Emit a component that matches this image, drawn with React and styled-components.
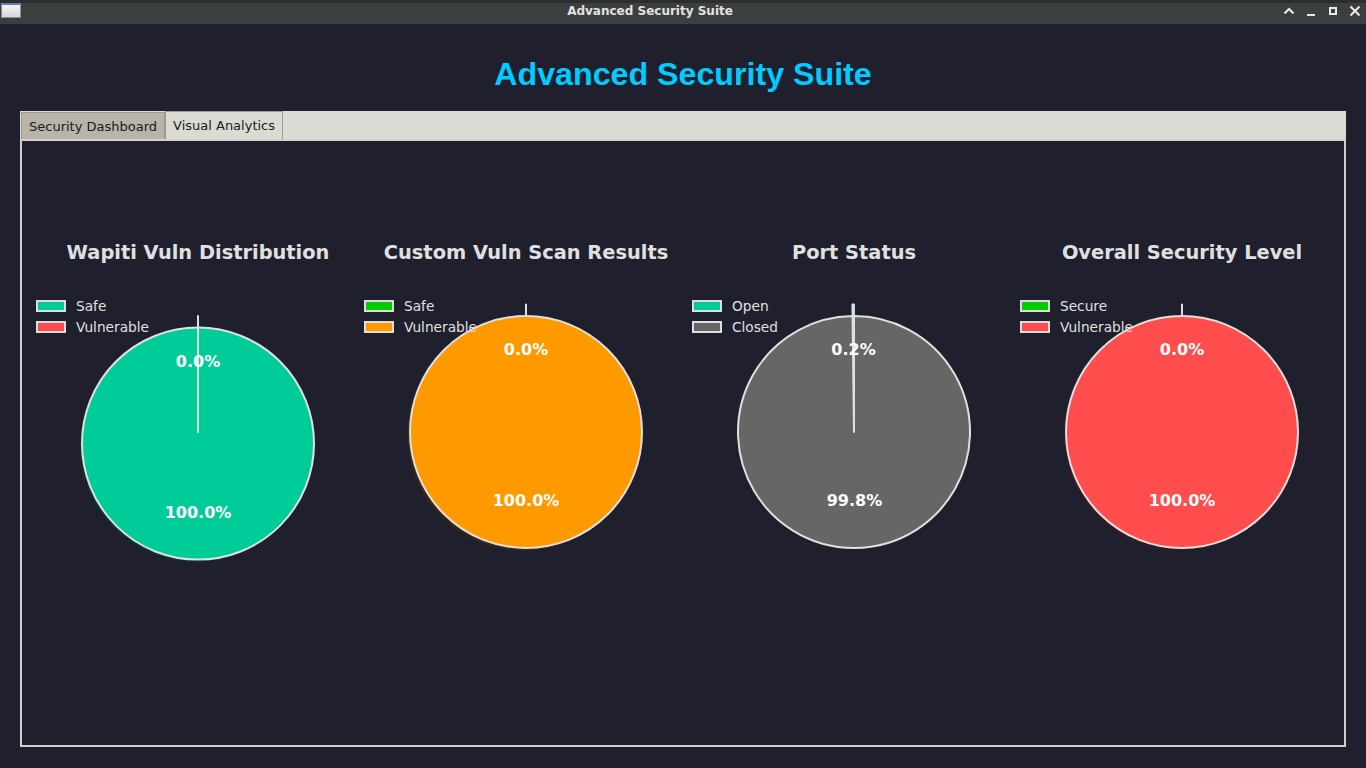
import React from 'react';
import styled, { createGlobalStyle } from 'styled-components';

const GlobalStyle = createGlobalStyle`
  html, body { margin: 0; padding: 0; background: #1f1f2e; }
  body { font-family: "DejaVu Sans", "Noto Sans", sans-serif; }
  #root { width: 1366px; height: 768px; }
`;

const Window = styled.div`
  width: 1366px;
  height: 768px;
  display: flex;
  flex-direction: column;
  background: #1f1f2e;
  overflow: hidden;
`;

const TitleBar = styled.div`
  height: 24px;
  flex: none;
  display: flex;
  align-items: stretch;
  background: #3c3f3f;
  box-shadow: inset 0 3px 0 #2c2e2e;
`;

const AppIcon = styled.div`
  width: 20px;
  height: 15px;
  margin: 3px 1px 0 1px;
  box-sizing: border-box;
  border: 1px solid #8c8f92;
  border-top: 2px solid #5b7fc4;
  background: linear-gradient(#f4f4f4, #d6d6d6);
`;

const TitleText = styled.div`
  flex: 1;
  text-align: center;
  font-family: "DejaVu Sans", sans-serif;
  font-weight: bold;
  font-size: 12px;
  line-height: 22px;
  color: #e2e2e2;
`;

const Controls = styled.div`
  display: flex;
`;

const CtrlButton = styled.div`
  width: 22px;
  height: 24px;
  display: flex;
  align-items: center;
  justify-content: center;
  padding-bottom: 2px;
  box-sizing: border-box;
`;

const Heading = styled.h1`
  margin: 30px 0 0;
  font-family: "Liberation Sans", Arial, sans-serif;
  font-weight: bold;
  font-size: 32.2px;
  line-height: 40px;
  color: #00ccff;
  text-align: center;
`;

const Notebook = styled.div`
  flex: 1;
  margin: 17px 20px 21px;
  display: flex;
  flex-direction: column;
  min-height: 0;
`;

const TabBar = styled.div`
  height: 28px;
  flex: none;
  display: flex;
  align-items: flex-end;
  background: #dcdad5;
`;

const Tab = styled.div`
  height: ${p => (p.$active ? 28 : 27)}px;
  box-sizing: border-box;
  padding: 0 7px 0 7px;
  display: flex;
  align-items: center;
  font-family: "DejaVu Sans", sans-serif;
  font-size: 13px;
  color: #1b1b1b;
  background: ${p => (p.$active ? '#dcdad5' : '#b8b4aa')};
  border: 1px solid #9e9a91;
  border-bottom: none;
  margin-left: ${p => (p.$first ? '1px' : '0')};
`;

const Pane = styled.div`
  flex: 1;
  border: 2px solid #d2d0ca;
  box-sizing: border-box;
  background: #1f1f2e;
`;

const ChartGrid = styled.div`
  display: grid;
  grid-template-columns: repeat(4, 328px);
  padding: 100px 0 0 12px;
`;

const ChartColumn = styled.div`
  display: flex;
  flex-direction: column;
  align-items: center;
`;

const ChartTitle = styled.h3`
  margin: 0;
  font-family: "DejaVu Sans", sans-serif;
  font-weight: bold;
  font-size: 19.4px;
  line-height: 24px;
  color: #e0e0e0;
  white-space: nowrap;
`;

const ChartArea = styled.div`
  position: relative;
  width: 328px;
  height: 280px;
  margin-top: 31px;
`;

const Legend = styled.div`
  position: absolute;
  top: -1px;
  left: 2px;
  z-index: 2;
  display: flex;
  flex-direction: column;
`;

const LegendRow = styled.div`
  height: 21px;
  display: flex;
  align-items: center;
`;

const Swatch = styled.span`
  width: 30px;
  height: 12px;
  box-sizing: border-box;
  border: 2px solid #dedede;
  background: ${p => p.$color};
  margin-right: 10px;
`;

const LegendLabel = styled.span`
  font-family: "DejaVu Sans", sans-serif;
  font-size: 13.7px;
  color: #e0e0e0;
  white-space: nowrap;
`;

const PieSvg = styled.svg`
  display: block;
  position: relative;
  z-index: 1;
`;

const EDGE = '#e0e0e0';

function darken(hex) {
  const n = parseInt(hex.slice(1), 16);
  const r = Math.round(((n >> 16) & 255) * 0.3);
  const g = Math.round(((n >> 8) & 255) * 0.3);
  const b = Math.round((n & 255) * 0.3);
  return `rgb(${r},${g},${b})`;
}

function Pie({ data, explode = 0.1 }) {
  const cx = 164, cy = 136, r = 116;
  const total = data.reduce((s, d) => s + d.value, 0);
  let cum = 0;
  const wedges = data.map((d, i) => {
    const frac = d.value / total;
    const t1 = 90 + 360 * cum;
    const t2 = t1 + 360 * frac;
    cum += frac;
    const mid = (((t1 + t2) / 2) * Math.PI) / 180;
    const ex = i === 0 ? explode : 0;
    const ox = cx + ex * r * Math.cos(mid);
    const oy = cy - ex * r * Math.sin(mid);
    return { ...d, frac, t1, t2, mid, ox, oy };
  });

  const pt = (w, deg) => {
    const a = (deg * Math.PI) / 180;
    return [w.ox + r * Math.cos(a), w.oy - r * Math.sin(a)];
  };

  const shape = (w, props, dx = 0, dy = 0) => {
    if (w.frac >= 0.99999) {
      return <circle cx={w.ox + dx} cy={w.oy + dy} r={r} {...props} />;
    }
    const [x1, y1] = pt(w, w.t1);
    const [x2, y2] = pt(w, w.t2);
    if (w.frac <= 0) {
      return <path d={`M ${w.ox + dx} ${w.oy + dy} L ${x1 + dx} ${y1 + dy} Z`} {...props} />;
    }
    const large = w.t2 - w.t1 > 180 ? 1 : 0;
    const d = `M ${w.ox + dx} ${w.oy + dy} L ${x1 + dx} ${y1 + dy} A ${r} ${r} 0 ${large} 0 ${x2 + dx} ${y2 + dy} Z`;
    return <path d={d} {...props} />;
  };

  return (
    <PieSvg width="328" height="280" viewBox="0 0 328 280">
      {wedges.map((w, i) => (
        <g key={`s${i}`}>{shape(w, { fill: darken(w.color), fillOpacity: 0.6, stroke: 'none' }, -2.5, 2.5)}</g>
      ))}
      {wedges.map((w, i) => (
        <g key={`w${i}`}>
          {shape(w, { fill: w.color, stroke: EDGE, strokeWidth: 2, strokeLinejoin: 'round' })}
        </g>
      ))}
      {wedges.map((w, i) => (
        <text
          key={`t${i}`}
          x={w.ox + 0.6 * r * Math.cos(w.mid)}
          y={w.oy - 0.6 * r * Math.sin(w.mid) - 1}
          textAnchor="middle"
          dominantBaseline="central"
          fontFamily="DejaVu Sans, sans-serif"
          fontWeight="bold"
          fontSize="16"
          fill="#ffffff"
        >
          {`${(w.frac * 100).toFixed(1)}%`}
        </text>
      ))}
    </PieSvg>
  );
}

const charts = [
  {
    title: 'Wapiti Vuln Distribution',
    data: [
      { label: 'Safe', value: 1, color: '#00cc99' },
      { label: 'Vulnerable', value: 0, color: '#ff4d4d' },
    ],
  },
  {
    title: 'Custom Vuln Scan Results',
    data: [
      { label: 'Safe', value: 0, color: '#00cc00' },
      { label: 'Vulnerable', value: 1, color: '#ff9900' },
    ],
  },
  {
    title: 'Port Status',
    data: [
      { label: 'Open', value: 2, color: '#00cc99' },
      { label: 'Closed', value: 998, color: '#666666' },
    ],
  },
  {
    title: 'Overall Security Level',
    data: [
      { label: 'Secure', value: 0, color: '#00cc00' },
      { label: 'Vulnerable', value: 1, color: '#ff4d4d' },
    ],
  },
];

const CtrlIcon = ({ children }) => (
  <svg width="12" height="12" viewBox="0 0 12 12" fill="none" stroke="#ececec" strokeWidth="2">
    {children}
  </svg>
);

export default function App() {
  return (
    <>
      <GlobalStyle />
      <Window>
        <TitleBar>
          <AppIcon />
          <TitleText>Advanced Security Suite</TitleText>
          <Controls>
            <CtrlButton>
              <CtrlIcon><polyline points="1.5,8.5 6,4 10.5,8.5" /></CtrlIcon>
            </CtrlButton>
            <CtrlButton>
              <CtrlIcon><line x1="2" y1="10" x2="10" y2="10" /></CtrlIcon>
            </CtrlButton>
            <CtrlButton>
              <CtrlIcon><rect x="3" y="3" width="6" height="6" /></CtrlIcon>
            </CtrlButton>
            <CtrlButton>
              <CtrlIcon><path d="M1.5 1.5 L10.5 10.5 M10.5 1.5 L1.5 10.5" /></CtrlIcon>
            </CtrlButton>
          </Controls>
        </TitleBar>
        <Heading>Advanced Security Suite</Heading>
        <Notebook>
          <TabBar>
            <Tab $first>Security Dashboard</Tab>
            <Tab $active>Visual Analytics</Tab>
          </TabBar>
          <Pane>
            <ChartGrid>
              {charts.map(c => (
                <ChartColumn key={c.title}>
                  <ChartTitle>{c.title}</ChartTitle>
                  <ChartArea>
                    <Legend>
                      {c.data.map(d => (
                        <LegendRow key={d.label}>
                          <Swatch $color={d.color} />
                          <LegendLabel>{d.label}</LegendLabel>
                        </LegendRow>
                      ))}
                    </Legend>
                    <Pie data={c.data} />
                  </ChartArea>
                </ChartColumn>
              ))}
            </ChartGrid>
          </Pane>
        </Notebook>
      </Window>
    </>
  );
}
